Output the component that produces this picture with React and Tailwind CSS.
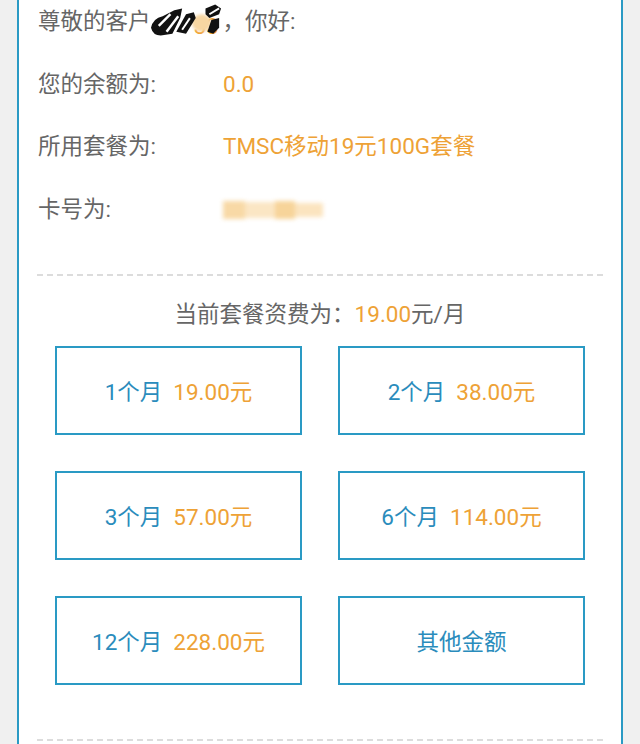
import React from "react";

const font = { fontFamily: '"Roboto", "Noto Sans CJK SC", sans-serif' };

function Dashed() {
  return (
    <div className="h-[2px] w-full bg-[repeating-linear-gradient(90deg,#dcdcdc_0px,#dcdcdc_6px,transparent_6px,transparent_10px)]" />
  );
}

function Scribble() {
  return (
    <svg width="72" height="36" viewBox="0 0 74 36" className="-my-[4px] shrink-0">
      <defs>
        <filter id="bl" x="-30%" y="-30%" width="160%" height="160%">
          <feGaussianBlur stdDeviation="1.8" />
        </filter>
      </defs>
      <text x="44" y="30" fontSize="23" fill="#f0a030" fontFamily="Roboto">33</text>
      <ellipse cx="52" cy="19" rx="10" ry="9" fill="#f7d6a2" filter="url(#bl)" />
      <path d="M0 24 Q2 14 12 12 L24 6 L32 4 L30 14 L22 30 L10 32 Q2 32 0 24Z" fill="#111" />
      <path d="M26 28 L36 10 L44 8 L46 14 L36 30 Z" fill="#111" />
      <path d="M56 4 L66 0 L72 4 L70 10 L60 14 L56 10 Z" fill="#111" />
      <path d="M62 16 L70 14 L70 24 L64 30 L58 28 Z" fill="#111" />
      <path d="M8 22 L20 10" stroke="#fff" strokeWidth="2.5" />
      <path d="M16 28 L28 12" stroke="#fff" strokeWidth="2.5" />
      <path d="M32 26 L40 14" stroke="#fff" strokeWidth="2" />
      <path d="M60 10 L70 4" stroke="#fff" strokeWidth="2" />
    </svg>
  );
}

function Row({ label, children }) {
  return (
    <div className="flex h-[40px] items-center text-[22.5px]">
      <div className="w-[185px] shrink-0 text-[#666666]">{label}</div>
      <div className="text-[#eea236]">{children}</div>
    </div>
  );
}

function Box({ months, price }) {
  return (
    <div className="flex h-[89px] items-center justify-center border-2 border-[#2a9ac4] pt-[6px] text-[22.5px]">
      {months ? (
        <>
          <span className="text-[#2a8cbc]">{months}</span>
          <span className="ml-[11px] text-[#eea236]">{price}</span>
        </>
      ) : (
        <span className="text-[#2a8cbc]">{price}</span>
      )}
    </div>
  );
}

export default function App() {
  return (
    <div className="flex h-[744px] w-[640px] overflow-hidden bg-[#f0f0f0]" style={font}>
      <div className="ml-[17px] flex h-full w-[606px] flex-col border-x-2 border-[#2a9ac4] bg-white">
        <div className="flex flex-col gap-[22.5px] pl-[19px] pt-[2px]">
          <div className="flex h-[40px] items-center text-[22.5px] text-[#666666]">
            <span>尊敬的客户</span>
            <Scribble />
            <span>，你好:</span>
          </div>
          <Row label="您的余额为:">0.0</Row>
          <Row label="所用套餐为:">TMSC移动19元100G套餐</Row>
          <Row label="卡号为:">
            <div className="flex h-[22px] w-[100px] items-center blur-[2px]">
              <div className="h-[18px] w-[22px] bg-[#f8d9a6]" />
              <div className="h-[16px] w-[30px] bg-[#fbe6c4]" />
              <div className="h-[18px] w-[20px] bg-[#f7d49a]" />
              <div className="h-[14px] w-[28px] bg-[#fbe4bf]" />
            </div>
          </Row>
        </div>
        <div className="mt-[44px] px-[18px]">
          <Dashed />
        </div>
        <div className="mt-[13px] flex h-[44px] items-center justify-center pt-[8px] text-[22.5px] text-[#666666]">
          <span>当前套餐资费为：</span>
          <span className="text-[#eea236]">19.00</span>
          <span>元/月</span>
        </div>
        <div className="mt-[13px] grid grid-cols-2 gap-x-[36px] gap-y-[36px] px-[36px]">
          <Box months="1个月" price="19.00元" />
          <Box months="2个月" price="38.00元" />
          <Box months="3个月" price="57.00元" />
          <Box months="6个月" price="114.00元" />
          <Box months="12个月" price="228.00元" />
          <Box price="其他金额" />
        </div>
        <div className="mt-[54px] px-[18px]">
          <Dashed />
        </div>
      </div>
    </div>
  );
}
